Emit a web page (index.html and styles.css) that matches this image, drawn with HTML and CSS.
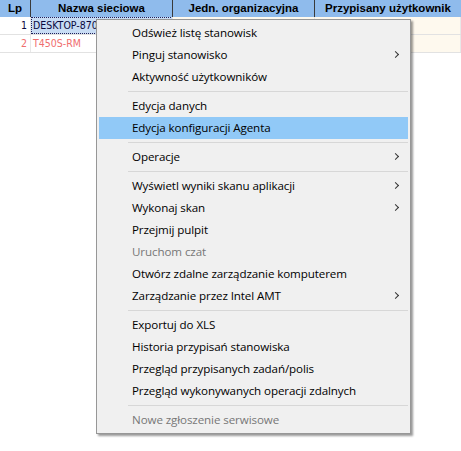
FILE: index.html
```html
<!DOCTYPE html>
<html>
<head>
<meta charset="utf-8">
<link rel="stylesheet" href="styles.css">
</head>
<body>
<div class="grid">
  <div class="hdr">
    <div class="hc c-lp">Lp</div>
    <div class="hc c-name">Nazwa sieciowa</div>
    <div class="hc c-org">Jedn. organizacyjna</div>
    <div class="hc c-user">Przypisany użytkownik</div>
  </div>
  <div class="row">
    <div class="cell c-lp num">1</div>
    <div class="cell c-name"><span class="sel">DESKTOP-870</span></div>
    <div class="cell c-org cream"></div>
    <div class="cell c-user cream"></div>
  </div>
  <div class="row pink">
    <div class="cell c-lp num">2</div>
    <div class="cell c-name">T450S-RM</div>
    <div class="cell c-org cream"></div>
    <div class="cell c-user cream"></div>
  </div>
</div>

<div class="menu">
  <div class="item">Odśwież listę stanowisk</div>
  <div class="item sub">Pinguj stanowisko</div>
  <div class="item">Aktywność użytkowników</div>
  <div class="sep"></div>
  <div class="item">Edycja danych</div>
  <div class="item hl">Edycja konfiguracji Agenta</div>
  <div class="sep"></div>
  <div class="item sub">Operacje</div>
  <div class="sep"></div>
  <div class="item sub">Wyświetl wyniki skanu aplikacji</div>
  <div class="item sub">Wykonaj skan</div>
  <div class="item">Przejmij pulpit</div>
  <div class="item dis">Uruchom czat</div>
  <div class="item">Otwórz zdalne zarządzanie komputerem</div>
  <div class="item sub">Zarządzanie przez Intel AMT</div>
  <div class="sep"></div>
  <div class="item">Exportuj do XLS</div>
  <div class="item">Historia przypisań stanowiska</div>
  <div class="item">Przegląd przypisanych zadań/polis</div>
  <div class="item">Przegląd wykonywanych operacji zdalnych</div>
  <div class="sep"></div>
  <div class="item dis">Nowe zgłoszenie serwisowe</div>
</div>
</body>
</html>
```
FILE: styles.css
```css
html, body {
  margin: 0;
  padding: 0;
  background: #ffffff;
  width: 461px;
  height: 451px;
  overflow: hidden;
}
body {
  position: relative;
  font-family: "DejaVu Sans", Tahoma, sans-serif;
}
.grid {
  width: 461px;
}
.hdr, .row {
  display: grid;
  grid-template-columns: 31px 142px 142px 146px;
}
.hdr {
  height: 17px;
  background: #8fbbec;
}
.hc {
  font-family: "Liberation Sans", Arial, sans-serif;
  font-weight: bold;
  font-size: 11.5px;
  line-height: 17px;
  text-align: center;
  color: #000;
  border-right: 1px solid #3a3a3a;
  white-space: nowrap;
  overflow: hidden;
}
.hc.c-user { border-right: none; }
.row {
  height: 18px;
  box-sizing: border-box;
  border-bottom: 1px solid #e2e2e2;
}
.cell {
  font-family: "DejaVu Sans Condensed", "DejaVu Sans", sans-serif;
  font-size: 10.5px;
  line-height: 17px;
  color: #0a0a40;
  border-right: 1px solid #e8e8e8;
  white-space: nowrap;
  overflow: hidden;
  padding-left: 2px;
}
.cell.num {
  text-align: right;
  padding-right: 3px;
  padding-left: 0;
}
.cream { background: #fef9ee; }
.pink .cell { color: #f06e6e; }
.sel {
  display: inline-block;
  background: #c8dcf4;
  outline: 1px dotted #20205a;
  outline-offset: -1px;
  margin-left: -2px;
  padding-left: 2px;
  width: 140px;
  height: 17px;
}
.menu {
  position: absolute;
  left: 96px;
  top: 19px;
  width: 313px;
  box-sizing: content-box;
  padding: 2px 0;
  background: #f0f0f0;
  border: 1px solid #979797;
  box-shadow: 2px 2px 2px rgba(0, 0, 0, 0.4);
  font-family: "Open Sans", "Noto Sans", sans-serif;
  font-size: 11.6px;
  letter-spacing: -0.1px;
}
.item {
  position: relative;
  height: 22px;
  line-height: 22px;
  margin: 0 2px;
  padding-left: 33px;
  color: #000;
  white-space: nowrap;
}
.item.hl { background: #91c9f7; }
.item.dis { color: #777777; }
.item.sub::after {
  content: "";
  position: absolute;
  right: 10px;
  top: 8px;
  width: 4px;
  height: 4px;
  border-top: 1px solid #333;
  border-right: 1px solid #333;
  transform: rotate(45deg);
}
.sep {
  height: 7px;
  margin-left: 31px;
  margin-right: 2px;
  position: relative;
}
.sep::after {
  content: "";
  position: absolute;
  left: 0;
  right: 0;
  top: 3px;
  height: 1px;
  background: #d7d7d7;
}
```
